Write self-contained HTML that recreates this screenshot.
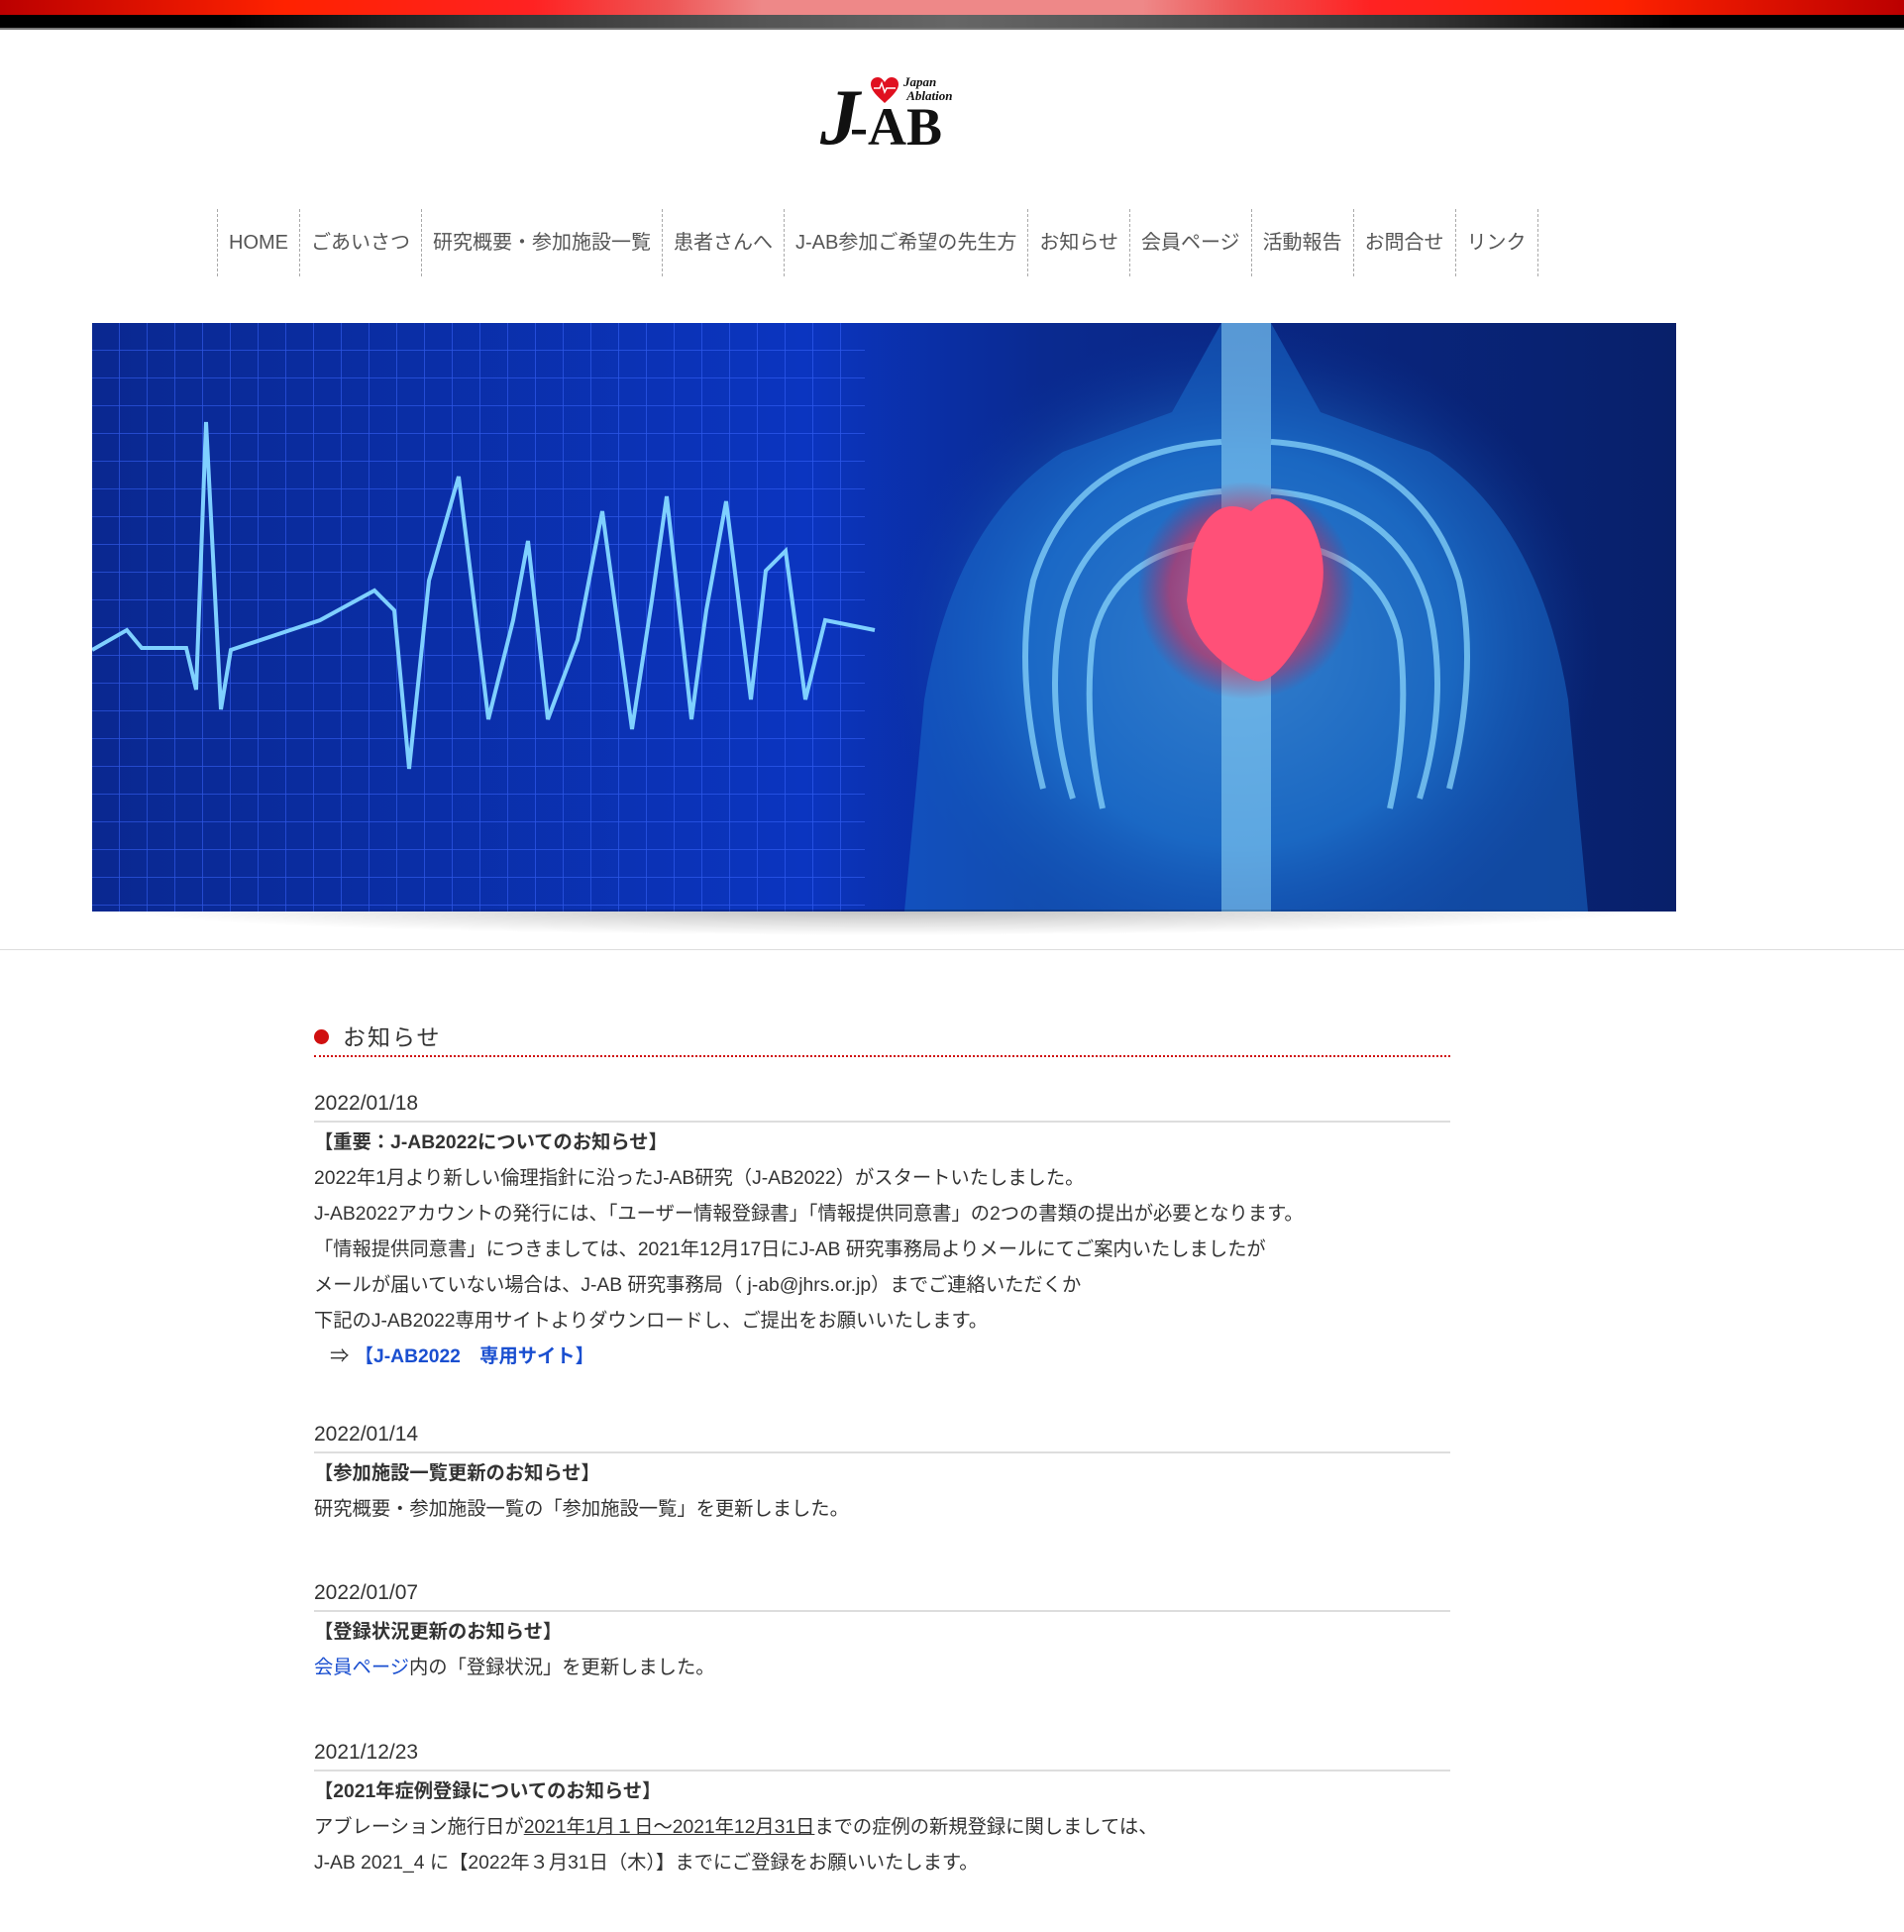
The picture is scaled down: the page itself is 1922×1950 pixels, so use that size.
<!DOCTYPE html>
<html><head><meta charset="utf-8"><style>
body{margin:0;width:1922px;height:1950px;background:#fff;font-family:"Liberation Sans","Noto Sans CJK JP",sans-serif;color:#333;overflow:hidden;position:relative}
.top{position:absolute;left:0;top:0;width:1922px;height:15px;background:linear-gradient(90deg,#b00 0%,#f20 15%,#f22 28%,#e55 35%,#e88 40%,#e88 60%,#e55 65%,#f22 72%,#f20 85%,#b00 100%)}
.top2{position:absolute;left:0;top:15px;width:1922px;height:13px;background:linear-gradient(90deg,#000 12%,#333 25%,#555 40%,#666 50%,#555 60%,#333 75%,#000 88%);border-bottom:2px solid #777}
.nav{position:absolute;top:211px;left:219px;height:68px;display:flex;border-left:1px dashed #aaa}
.nav div{border-right:1px dashed #aaa;font-size:20px;color:#555;line-height:68px;padding:0 11px}
.hero{position:absolute;left:93px;top:326px;width:1599px;height:594px;overflow:hidden;background:#0a2aa0}
.shadow{position:absolute;left:110px;top:918px;width:1565px;height:26px;background:radial-gradient(ellipse at 50% 0,rgba(0,0,0,.25),rgba(0,0,0,0) 70%)}
.hr{position:absolute;left:0;top:958px;width:1922px;height:1px;background:#ddd}
.sec{position:absolute;left:317px;width:1147px}
h2{margin:0;font-weight:normal;font-size:23px;letter-spacing:2px;color:#333}
.dot{display:inline-block;width:15px;height:15px;border-radius:50%;background:#d01010;margin-right:14px;vertical-align:1px}
.date{font-size:21px;border-bottom:2px solid #ddd;padding-bottom:5px}
p{margin:0;font-size:19.3px;line-height:36px}
b{font-weight:bold}
a{color:#1a4fd0;text-decoration:none}
</style></head><body>
<div class="top"></div><div class="top2"></div>
<div style="position:absolute;left:828px;top:72px;width:140px;height:90px">
<div style="position:absolute;left:0;top:0;font-family:'Liberation Serif',serif;font-size:80px;font-style:italic;font-weight:bold;color:#111;line-height:94px">J</div>
<div style="position:absolute;left:30px;top:26px;font-family:'Liberation Serif',serif;font-size:54px;font-weight:bold;color:#111;line-height:60px">-AB</div>
<svg style="position:absolute;left:50px;top:5px" width="30" height="28" viewBox="0 0 30 28"><path d="M15 27C5 18 1 13 1 8 1 3 5 1 8 1c3 0 5 2 7 5 2-3 4-5 7-5 3 0 7 2 7 7 0 5-4 10-14 19z" fill="#e01020"/><path d="M4 12h6l2-5 3 9 2-4h9" stroke="#fff" stroke-width="1.5" fill="none"/></svg>
<div style="position:absolute;left:84px;top:4px;font-family:'Liberation Serif',serif;font-style:italic;font-weight:bold;font-size:13px;line-height:14px;color:#111">Japan<br>&nbsp;Ablation</div>
</div>
<div class="nav"><div>HOME</div><div>ごあいさつ</div><div>研究概要・参加施設一覧</div><div>患者さんへ</div><div>J-AB参加ご希望の先生方</div><div>お知らせ</div><div>会員ページ</div><div>活動報告</div><div>お問合せ</div><div>リンク</div></div>
<div class="hero">
<svg width="1599" height="594" viewBox="0 0 1599 594">
<defs>
<pattern id="g" width="28" height="28" patternUnits="userSpaceOnUse"><path d="M28 0V28M0 28H28" stroke="#3a66ff" stroke-width="1.5" opacity=".7"/></pattern>
<linearGradient id="bg" x1="0" x2="1"><stop offset="0" stop-color="#0a2890"/><stop offset=".45" stop-color="#0b35c0"/><stop offset=".6" stop-color="#0a2a90"/><stop offset="1" stop-color="#08206a"/></linearGradient>
<radialGradient id="body" cx=".5" cy=".5" r=".5"><stop offset="0" stop-color="#7fdcff"/><stop offset=".6" stop-color="#2a8fe0"/><stop offset="1" stop-color="#0a3aa0" stop-opacity="0"/></radialGradient>
<radialGradient id="heart" cx=".5" cy=".5" r=".5"><stop offset="0" stop-color="#ff7090"/><stop offset=".7" stop-color="#e02850"/><stop offset="1" stop-color="#c01040" stop-opacity="0"/></radialGradient>
</defs>
<rect width="1599" height="594" fill="url(#bg)"/>
<rect width="780" height="594" fill="url(#g)"/>
<polyline points="0,330 35,310 50,328 95,328 105,370 115,100 130,390 140,330 230,300 285,270 305,290 320,450 340,260 370,155 400,400 425,300 440,220 460,400 490,320 515,190 545,410 565,280 580,175 605,400 620,290 640,180 665,380 680,250 700,230 720,380 740,300 790,310" fill="none" stroke="#7fd0ff" stroke-width="4"/>
<ellipse cx="1160" cy="330" rx="360" ry="330" fill="url(#body)" opacity=".55"/>
<path d="M820 594 L840 380 Q870 200 980 130 L1090 90 L1140 0 L1190 0 L1240 90 L1350 130 Q1460 200 1490 380 L1510 594Z" fill="#1a6fd0" opacity=".5"/>
<rect x="1140" y="0" width="50" height="594" fill="#9fe6ff" opacity=".5"/>
<g stroke="#8fdcff" stroke-width="6" fill="none" opacity=".7">
<path d="M1140 120 Q990 130 950 260 Q930 350 960 470"/><path d="M1140 170 Q1010 180 980 290 Q960 380 990 480"/><path d="M1140 220 Q1030 230 1010 320 Q1000 400 1020 490"/>
<path d="M1190 120 Q1340 130 1380 260 Q1400 350 1370 470"/><path d="M1190 170 Q1320 180 1350 290 Q1370 380 1340 480"/><path d="M1190 220 Q1300 230 1320 320 Q1330 400 1310 490"/>
</g>
<ellipse cx="1165" cy="270" rx="110" ry="110" fill="url(#heart)" opacity=".6"/>
<path d="M1110 230 Q1130 170 1170 190 Q1200 160 1230 200 Q1260 260 1220 320 Q1190 370 1170 360 Q1110 330 1105 280Z" fill="#ff5078"/>
</svg></div>
<div class="shadow"></div>
<div class="hr"></div>
<div class="sec" style="top:1028px"><h2><span class="dot"></span>お知らせ</h2><div style="border-bottom:2px dotted #d01010;margin-top:3px"></div></div>
<div class="sec" style="top:1102px"><div class="date">2022/01/18</div>
<p style="margin-top:3px"><b>【重要：J-AB2022についてのお知らせ】</b></p>
<p>2022年1月より新しい倫理指針に沿ったJ-AB研究（J-AB2022）がスタートいたしました。</p>
<p>J-AB2022アカウントの発行には、「ユーザー情報登録書」「情報提供同意書」の2つの書類の提出が必要となります。</p>
<p>「情報提供同意書」につきましては、2021年12月17日にJ-AB 研究事務局よりメールにてご案内いたしましたが</p>
<p>メールが届いていない場合は、J-AB 研究事務局（ j-ab@jhrs.or.jp）までご連絡いただくか</p>
<p>下記のJ-AB2022専用サイトよりダウンロードし、ご提出をお願いいたします。</p>
<p>&nbsp;&nbsp;&nbsp;⇒ <a><b>【J-AB2022　専用サイト】</b></a></p></div>
<div class="sec" style="top:1436px"><div class="date">2022/01/14</div>
<p style="margin-top:3px"><b>【参加施設一覧更新のお知らせ】</b></p>
<p>研究概要・参加施設一覧の「参加施設一覧」を更新しました。</p></div>
<div class="sec" style="top:1596px"><div class="date">2022/01/07</div>
<p style="margin-top:3px"><b>【登録状況更新のお知らせ】</b></p>
<p><a>会員ページ</a>内の「登録状況」を更新しました。</p></div>
<div class="sec" style="top:1757px"><div class="date">2021/12/23</div>
<p style="margin-top:3px"><b>【2021年症例登録についてのお知らせ】</b></p>
<p>アブレーション施行日が<u>2021年1月１日～2021年12月31日</u>までの症例の新規登録に関しましては、</p>
<p>J-AB 2021_4 に【2022年３月31日（木）】までにご登録をお願いいたします。</p></div>
</body></html>
